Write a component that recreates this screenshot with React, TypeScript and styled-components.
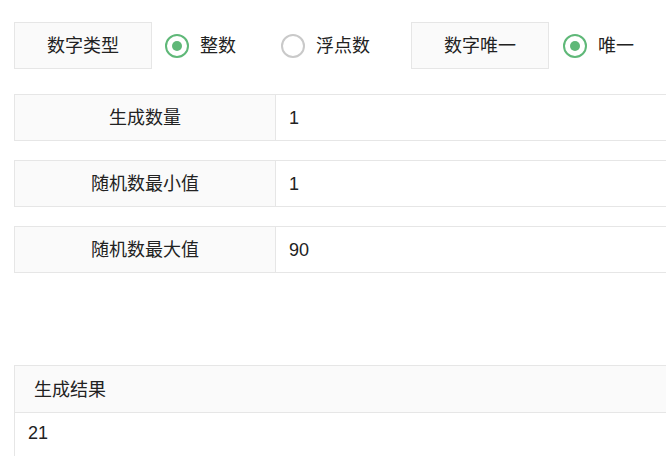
import React from "react";
import styled, { createGlobalStyle } from "styled-components";

const Global = createGlobalStyle`
  html, body { margin: 0; padding: 0; background: #fff; overflow: hidden; }
  body {
    font-family: "Liberation Sans", "Noto Sans CJK SC", Arial, sans-serif;
    color: #222;
    font-size: 18px;
  }
  * { box-sizing: border-box; }
`;

const Page = styled.div`
  width: 900px;
  padding: 22px 0 0 14px;
`;

const TopRow = styled.div`
  display: flex;
  align-items: center;
  height: 47px;
`;

const LabelBox = styled.div<{ $gap?: number }>`
  width: 138px;
  height: 47px;
  border: 1px solid #e6e6e6;
  background: #fafafa;
  display: flex;
  align-items: center;
  justify-content: center;
  padding-bottom: 3px;
  margin-right: ${(p) => p.$gap ?? 13}px;
  flex-shrink: 0;
`;

const RadioItem = styled.label<{ $after?: number }>`
  display: inline-flex;
  align-items: center;
  gap: 11px;
  margin-right: ${(p) => p.$after ?? 0}px;
  cursor: pointer;
`;

const RadioText = styled.span`
  padding-bottom: 3px;
`;

const RadioCircle = styled.span<{ $on?: boolean }>`
  width: 24px;
  height: 24px;
  border-radius: 50%;
  border: 2px solid ${(p) => (p.$on ? "#5FB878" : "#c9c9c9")};
  display: inline-flex;
  align-items: center;
  justify-content: center;
  &::after {
    content: "";
    width: 10px;
    height: 10px;
    border-radius: 50%;
    background: ${(p) => (p.$on ? "#5FB878" : "transparent")};
  }
`;

const Fields = styled.div`
  display: flex;
  flex-direction: column;
  gap: 19px;
  margin-top: 25px;
`;

const FieldRow = styled.div`
  display: flex;
  width: 800px;
  height: 47px;
  border: 1px solid #e6e6e6;
`;

const FieldLabel = styled.div`
  width: 261px;
  flex-shrink: 0;
  background: #fafafa;
  border-right: 1px solid #e6e6e6;
  display: flex;
  align-items: center;
  justify-content: center;
  padding-bottom: 3px;
`;

const FieldValue = styled.div`
  flex: 1;
  display: flex;
  align-items: center;
  padding-left: 13px;
  padding-top: 1px;
`;

const Card = styled.div`
  margin-top: 92px;
  width: 800px;
  border: 1px solid #e6e6e6;
  border-bottom: none;
`;

const CardHeader = styled.div`
  height: 47px;
  background: #fafafa;
  border-bottom: 1px solid #e6e6e6;
  display: flex;
  align-items: center;
  padding-left: 19px;
  padding-bottom: 2px;
`;

const CardBody = styled.div`
  padding: 8px 13px 20px;
  line-height: 24px;
`;

export default function App() {
  const fields = [
    { label: "生成数量", value: "1" },
    { label: "随机数最小值", value: "1" },
    { label: "随机数最大值", value: "90" },
  ];
  return (
    <>
      <Global />
      <Page>
        <TopRow>
          <LabelBox>数字类型</LabelBox>
          <RadioItem $after={45}>
            <RadioCircle $on />
            <RadioText>整数</RadioText>
          </RadioItem>
          <RadioItem $after={41}>
            <RadioCircle />
            <RadioText>浮点数</RadioText>
          </RadioItem>
          <LabelBox $gap={14}>数字唯一</LabelBox>
          <RadioItem>
            <RadioCircle $on />
            <RadioText>唯一</RadioText>
          </RadioItem>
        </TopRow>
        <Fields>
          {fields.map((f) => (
            <FieldRow key={f.label}>
              <FieldLabel>{f.label}</FieldLabel>
              <FieldValue>{f.value}</FieldValue>
            </FieldRow>
          ))}
        </Fields>
        <Card>
          <CardHeader>生成结果</CardHeader>
          <CardBody>21</CardBody>
        </Card>
      </Page>
    </>
  );
}
